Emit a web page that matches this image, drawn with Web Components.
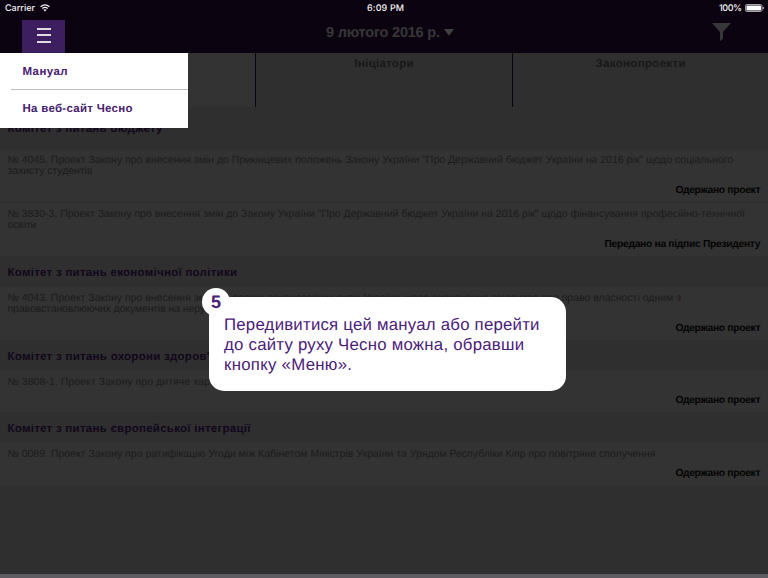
<!DOCTYPE html>
<html lang="uk">
<head>
<meta charset="utf-8">
<title>Чесно</title>
<style>
html,body{margin:0;padding:0}
body{width:768px;height:578px;overflow:hidden;background:#2f2f2f;font-family:"Liberation Sans",Arial,sans-serif;text-rendering:geometricPrecision}
</style>
</head>
<body>
<chesno-app></chesno-app>
<script>
function define(name, html, setup) {
  const t = document.createElement('template');
  t.innerHTML = html;
  customElements.define(name, class extends HTMLElement {
    constructor() {
      super();
      this.attachShadow({mode: 'open'}).append(t.content.cloneNode(true));
    }
    connectedCallback() { if (setup) setup(this, this.shadowRoot); }
  });
}

// One line of text, tracked so that it fills the width given in its attribute.
define('text-run', `<style>:host{display:block;white-space:nowrap;width:max-content}span{display:inline-block}</style><span><slot></slot></span>`, (el, root) => {
  const span = root.querySelector('span');
  const target = parseFloat(el.getAttribute('width'));
  const n = el.textContent.length;
  if (!target || n < 2) return;
  const ls = (target - span.getBoundingClientRect().width) / (n - 1);
  span.style.letterSpacing = ls + 'px';
  span.style.marginRight = -ls + 'px';
});

define('status-bar', `<style>
:host{display:flex;justify-content:space-between;align-items:center;height:16px;padding:0 4px 0 5px;box-sizing:border-box;color:#f2f2f4;font:500 9px/16px Inter,"Liberation Sans",sans-serif;position:relative}
.l,.r{display:flex;align-items:center}.l{gap:5px}.r{gap:3px}
.c{position:absolute;left:367px;top:0}
svg{display:block}
text-run{padding-top:1px;line-height:15px}
</style>
<div class="l"><text-run width="30">Carrier</text-run>
<svg width="10" height="8" viewBox="0 0 10 8"><g fill="none" stroke="#f2f2f4" stroke-width="1.3"><path d="M.6 2.8Q5-1 9.4 2.8M2.3 4.6Q5 2.3 7.7 4.6"/></g><path d="M3.4 5.7Q5 4.6 6.6 5.7L5 7.6Z" fill="#f2f2f4"/></svg></div>
<div class="c"><text-run width="37">6:09 PM</text-run></div>
<div class="r"><text-run width="23">100%</text-run>
<svg width="19" height="8" viewBox="0 0 19 8"><rect x=".5" y=".5" width="16.5" height="7" rx="1.6" fill="none" stroke="#a7a4ab"/><rect x="1.5" y="1.4" width="14.5" height="5.2" rx=".5" fill="#fff"/><path d="M17.8 2.5q1 .3 1 1.5t-1 1.5z" fill="#f2f2f4"/></svg></div>`);

define('nav-bar', `<style>
:host{display:grid;grid-template-columns:200px 1fr 200px;height:37px;color:#373639}
.menu{margin:4px 0 0 22px;width:43px;height:33px;background:#3d1e5e;display:flex;justify-content:center;padding-top:8px;box-sizing:border-box}
.date{display:flex;justify-content:center;gap:4px;padding:8px 0 0 12px;font:bold 14.5px/18px "Liberation Sans",sans-serif;white-space:nowrap}
.date svg{margin-top:5px}
.filter{justify-self:end;margin:7px 37px 0 0}
svg{display:block}
</style>
<div class="menu"><svg width="14" height="16" viewBox="0 0 14 16"><path d="M0 0h14v2H0zM0 6h14v2H0zM0 13h14v2H0z" fill="#e0dbe5"/></svg></div>
<div class="date"><text-run width="114">9 лютого 2016 р.</text-run><svg width="10" height="7" viewBox="0 0 10 7"><path d="M0 0h10L5.6 6Q5 6.8 4.4 6Z" fill="#414043"/></svg></div>
<div class="filter"><svg width="19" height="19" viewBox="0 0 19 19"><path d="M0 0h19L11 9V15.5L8 18.2V9Z" fill="#373639"/></svg></div>`);

define('tab-item', `<style>
:host{display:flex;justify-content:center;height:54px;box-sizing:border-box;background:#2f2f2f;border-left:1px solid #0b0410;color:#181818;font:bold 11.5px/13px "Liberation Sans",sans-serif;padding-top:5px}
:host([active]){background:#333;border-left:0}
</style><slot></slot>`);

define('tab-strip', `<style>:host{display:grid;grid-template-columns:255px 257px 256px}</style><slot></slot>`);

define('committee-heading', `<style>
:host{display:block;height:31px;box-sizing:border-box;padding:10px 0 0 7.5px;background:#2f2f2f;color:#12071c;font:bold 11.5px/14px "Liberation Sans",sans-serif}
:host([first]){height:42px;padding-top:15px}
</style><slot></slot>`);

define('bill-row', `<style>
:host{display:flex;flex-direction:column;justify-content:space-between;height:54px;box-sizing:border-box;padding:6px 7.5px 4px;background:#333;color:#1b1b1b;font:10.5px/11px "Liberation Sans",sans-serif}
:host([short]){height:42px}
:host([divided]){border-top:1px solid #2e2e2e}
.s{align-self:flex-end;color:#030303;font:bold 10.3px/14px "Liberation Sans",sans-serif}
</style><div><slot></slot></div><div class="s"><slot name="status"></slot></div>`);

define('side-menu', `<style>
:host{position:absolute;left:0;top:53px;width:188px;height:75px;background:#fff;color:#47216f;font:bold 11.5px/14px "Liberation Sans",sans-serif;box-sizing:border-box;padding:0 0 0 11px;display:grid;grid-template-rows:36px 39px}
div{padding-left:11.5px;display:flex;align-items:center}
div:first-of-type{padding-top:1px}
div+div{border-top:1px solid #bdbdbd}
</style>
<div><text-run width="45">Мануал</text-run></div>
<div><text-run width="110">На веб-сайт Чесно</text-run></div>`);

define('help-bubble', `<style>
:host{position:absolute;left:209px;top:297px;width:357px;height:94px;border-radius:15px;background:#fff;color:#4b2078;box-sizing:border-box;padding:17.5px 0 0 15px;font:16.8px/20.3px "Liberation Sans",sans-serif}
.n{position:absolute;left:-7px;top:-9px;width:28px;height:28px;border-radius:50%;background:#fff;text-align:center;font:bold 18px/28px "Liberation Sans",sans-serif}
</style><div class="n">5</div>
<text-run width="315.5">Передивитися цей мануал або перейти</text-run>
<text-run width="300">до сайту руху Чесно можна, обравши</text-run>
<text-run width="128">кнопку «Меню».</text-run>`);

define('chesno-app', `<style>
:host{display:flex;flex-direction:column;position:relative;width:768px;height:578px;background:#2f2f2f;overflow:hidden}
header{background:#0b0410;height:53px}
footer{height:4px;margin-top:auto;background:#5f5c64}
</style>
<header><status-bar></status-bar><nav-bar></nav-bar></header>
<tab-strip>
<tab-item active></tab-item>
<tab-item><text-run width="59">Ініціатори</text-run></tab-item>
<tab-item><text-run width="90">Законопроекти</text-run></tab-item>
</tab-strip>
<committee-heading first><text-run width="155">Комітет з питань бюджету</text-run></committee-heading>
<bill-row style="height:53px"><text-run width="725.5">№ 4045. Проект Закону про внесення змін до Прикінцевих положень Закону України "Про Державний бюджет України на 2016 рік" щодо соціального</text-run><text-run width="85">захисту студентів</text-run><text-run slot="status" width="85">Одержано проект</text-run></bill-row>
<bill-row divided><text-run width="737.5">№ 3830-3. Проект Закону про внесення змін до Закону України "Про Державний бюджет України на 2016 рік" щодо фінансування професійно-технічної</text-run><text-run width="29">освіти</text-run><text-run slot="status" width="156">Передано на підпис Президенту</text-run></bill-row>
<committee-heading><text-run width="229.5">Комітет з питань економічної політики</text-run></committee-heading>
<bill-row style="height:53px"><text-run width="673.5">№ 4043. Проект Закону про внесення змін до деяких законодавчих актів України щодо визначення свідоцтва про право власності одним з</text-run><text-run width="254">правовстановлюючих документів на нерухоме майно</text-run><text-run slot="status" width="85">Одержано проект</text-run></bill-row>
<committee-heading><text-run width="209">Комітет з питань охорони здоров'я</text-run></committee-heading>
<bill-row short style="height:41px"><text-run width="242">№ 3808-1. Проект Закону про дитяче харчування</text-run><text-run slot="status" width="85">Одержано проект</text-run></bill-row>
<committee-heading><text-run width="243">Комітет з питань європейської інтеграції</text-run></committee-heading>
<bill-row short><text-run width="648">№ 0089. Проект Закону про ратифікацію Угоди між Кабінетом Міністрів України та Урядом Республіки Кіпр про повітряне сполучення</text-run><text-run slot="status" width="85">Одержано проект</text-run></bill-row>
<footer></footer>
<side-menu></side-menu>
<help-bubble></help-bubble>`);
</script>
</body>
</html>
